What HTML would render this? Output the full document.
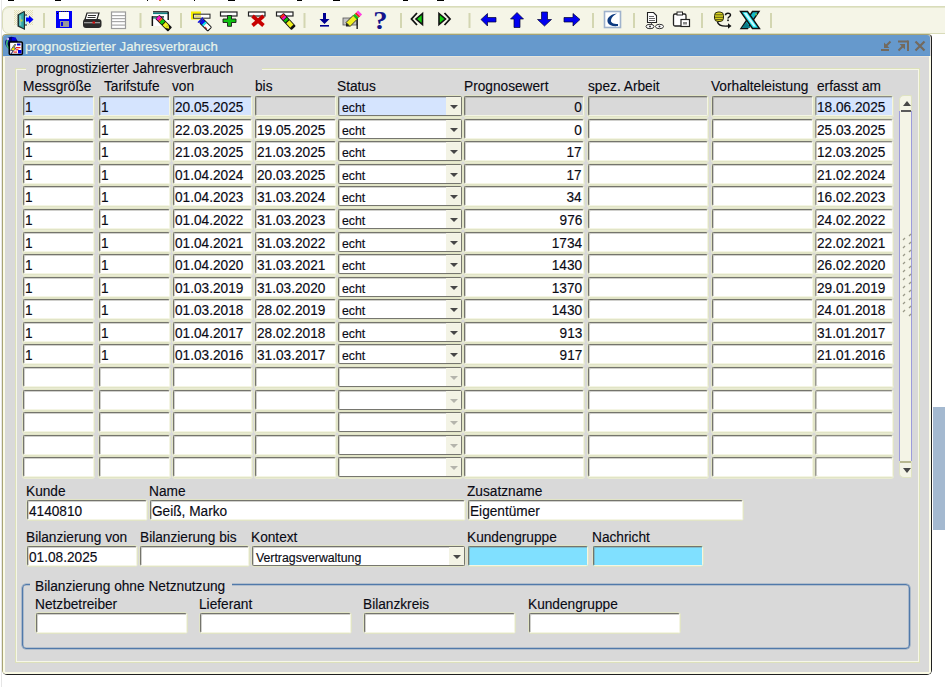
<!DOCTYPE html>
<html><head><meta charset="utf-8"><style>
*{box-sizing:border-box}
html,body{margin:0;padding:0}
body{width:945px;height:687px;overflow:hidden;position:relative;background:#fff;font-family:"Liberation Sans",sans-serif;color:#000}
.a{position:absolute}
.f{position:absolute;border:1px solid #e1e4c6;background:#fff;border-radius:3px}
.f:before{content:"";position:absolute;left:0;top:0;right:0;bottom:0;border-top:1px solid #74746c;border-left:1px solid #74746c;border-right:1px solid #f4f5e4;border-bottom:1px solid #f4f5e4;border-radius:2px;box-shadow:inset 1px 1px 0 rgba(120,120,110,0.35)}
.f span{position:absolute;left:2px;top:1.6px;font-size:14px;line-height:16px;white-space:nowrap;color:#0a0a14;transform:scale(0.975,1.1);transform-origin:0 0;-webkit-text-stroke:0.15px #0a0a14}
.f span.r{left:auto;right:2px;transform-origin:100% 0}
.cur{background:#d5e4fe}
.dis{background:#d9d9d9}
.cy{background:#80e0ff}
.cb span{font-size:12.3px;left:4px;top:4px;transform:none}
.cb:before{border-right-color:#76766f;border-bottom-color:#76766f;border-radius:2px}
.arr{position:absolute;right:1px;top:1px;bottom:1px;width:15px;background:#f3f3e5}
.arr:after{content:"";position:absolute;left:4px;top:8px;border-left:4px solid transparent;border-right:4px solid transparent;border-top:4px solid #474747}
.ea:after{border-top-color:#b4b4ac}
.lt:before{border-top-color:#8a8a80;border-left-color:#989890;box-shadow:inset 1px 0 0 rgba(140,140,125,0.45), inset 0 1px 0 rgba(120,120,110,0.3)}
.lab{position:absolute;font-size:13.7px;line-height:16px;white-space:nowrap;color:#0a0a14;transform:scaleY(1.1);transform-origin:0 0;-webkit-text-stroke:0.12px #0a0a14}
</style></head><body>

<div class="a" style="left:1px;top:0;width:1px;height:687px;background:#e6e6e6"></div>
<div class="a" style="left:8px;top:0;width:6px;height:1px;background:#000"></div>
<div class="a" style="left:55px;top:0;width:6px;height:1px;background:#000"></div>
<div class="a" style="left:147px;top:0;width:1px;height:1px;background:#000"></div>
<div class="a" style="left:194px;top:0;width:1px;height:1px;background:#000"></div>
<div class="a" style="left:228px;top:0;width:7px;height:1px;background:#000"></div>
<div class="a" style="left:297px;top:0;width:5px;height:1px;background:#000"></div>
<div class="a" style="left:333px;top:0;width:7px;height:1px;background:#000"></div>
<div class="a" style="left:403px;top:0;width:5px;height:1px;background:#000"></div>
<div class="a" style="left:437px;top:0;width:7px;height:1px;background:#000"></div>
<div class="a" style="left:159px;top:0;width:2px;height:1px;background:#d08040"></div>
<div class="a" style="left:2px;top:6px;width:950px;height:28px;background:#f5f5e7;border:1px solid #d9dcba;border-radius:7px 0 0 7px;box-shadow:inset 0 1px 0 #e3e6ca"></div>
<svg class="a" style="left:0;top:0" width="945" height="34" viewBox="0 0 945 34"><rect x="43" y="13" width="2" height="15" fill="#d3d6b1"/>
<rect x="139.5" y="13" width="2" height="15" fill="#d3d6b1"/>
<rect x="180" y="13" width="2" height="15" fill="#d3d6b1"/>
<rect x="303.5" y="13" width="2" height="15" fill="#d3d6b1"/>
<rect x="400" y="13" width="2" height="15" fill="#d3d6b1"/>
<rect x="468.5" y="13" width="2" height="15" fill="#d3d6b1"/>
<rect x="592" y="13" width="2" height="15" fill="#d3d6b1"/>
<rect x="633" y="13" width="2" height="15" fill="#d3d6b1"/>
<rect x="701" y="13" width="2" height="15" fill="#d3d6b1"/>
<rect x="770" y="13" width="2" height="15" fill="#d3d6b1"/>
<defs><pattern id="chk" width="2" height="2" patternUnits="userSpaceOnUse"><rect width="1" height="1" fill="#e2dfb6"/><rect x="1" y="1" width="1" height="1" fill="#e2dfb6"/></pattern></defs>
<rect x="14" y="10" width="19" height="15" fill="url(#chk)"/>
<rect x="24" y="14.5" width="3" height="11" fill="#1a1a1a"/>
<rect x="25" y="15.5" width="2" height="9" fill="#b0f0f8"/>
<polygon points="17.5,14.5 24,11 25,11.5 25,30 17.5,26.5" fill="#1f3030"/>
<polygon points="19,15 23.8,12.3 23.8,28.3 19,25.8" fill="#30a8a8"/>
<rect x="19.5" y="15.5" width="1.8" height="10" fill="#80c8c8"/>
<rect x="20.5" y="19.5" width="2" height="2" fill="#c8d040"/>
<polygon points="26,17.5 29,17.5 29,15.5 33.5,19.5 29,23.5 29,21.5 26,21.5" fill="#0000ff"/>
<rect x="56" y="11" width="16" height="17" fill="#0000f8"/>
<rect x="59" y="12" width="10" height="7" fill="#fff"/>
<path d="M59,11.5 h10" stroke="#222" stroke-width="1" stroke-dasharray="1,1"/>
<rect x="60" y="21" width="9" height="6" fill="#9a9a9a"/>
<rect x="61" y="22" width="2" height="4" fill="#0000f8"/>
<rect x="57" y="13" width="1" height="1" fill="#000"/>
<polygon points="87,13 99,13 97,19.5 85,19.5" fill="#fff" stroke="#222" stroke-width="1.2"/>
<rect x="88" y="15" width="8" height="1" fill="#333"/><rect x="87.5" y="17" width="8" height="1" fill="#333"/>
<rect x="83" y="19" width="18.5" height="9" rx="3" fill="#2b2b2b"/>
<rect x="84" y="22" width="16" height="1.3" fill="#9a9a9a"/>
<rect x="92.5" y="21.5" width="2.5" height="2" fill="#e01010"/>
<rect x="111.5" y="12" width="14" height="16.5" fill="#fff" stroke="#9c9c9c" stroke-width="1.2"/>
<rect x="112" y="15" width="13" height="1.2" fill="#a8a8a8"/>
<rect x="112" y="18" width="13" height="1.2" fill="#a8a8a8"/>
<rect x="112" y="21" width="13" height="1.2" fill="#a8a8a8"/>
<rect x="112" y="24.5" width="13" height="1.2" fill="#a8a8a8"/>
<rect x="152.5" y="12" width="16" height="14" fill="#fff"/>
<rect x="153" y="11.2" width="15.5" height="1.3" fill="#111"/>
<rect x="153" y="12.5" width="15.5" height="1.6" fill="#128080"/>
<rect x="167.5" y="12" width="1.4" height="8" fill="#111"/>
<rect x="152" y="16.3" width="12" height="1.2" fill="#111"/>
<rect x="152.5" y="17.4" width="11" height="1.2" fill="#128080"/>
<rect x="151.6" y="16.3" width="1.5" height="9.7" fill="#111"/>
<g transform="translate(163.3,22.8) rotate(45)"><rect x="-8.5" y="-3" width="18" height="6" rx="1" fill="#111"/><rect x="-8" y="-2.2" width="3" height="4.4" fill="#ff10c8"/><rect x="-5" y="-2.2" width="2" height="4.4" fill="#ff5020"/><rect x="-3" y="-2.2" width="3.2" height="4.4" fill="#10c810"/><rect x="1.2" y="-2.2" width="4" height="4.4" fill="#f0f020"/><polygon points="5.2,-2.2 8.5,0 5.2,2.2" fill="#f0f020"/></g>
<rect x="191" y="11.5" width="10" height="8" fill="#f8f000"/>
<rect x="193.5" y="14.2" width="16.5" height="4" fill="#fff" stroke="#333" stroke-width="1.1"/>
<rect x="194.5" y="15.2" width="6.5" height="2" fill="#e8e070"/>
<g transform="translate(204,23.5) rotate(45)"><rect x="-4" y="-3.2" width="12.5" height="6.4" rx="1.5" fill="#111"/><rect x="-3.5" y="-2.4" width="3" height="4.8" fill="#1010f0"/><rect x="-0.5" y="-2.4" width="2" height="4.8" fill="#10e8f8"/><rect x="1.5" y="-2.2" width="6" height="4.4" fill="#fff"/><rect x="3" y="1.3" width="3" height="0.9" fill="#d02020"/><polygon points="-4,-3.2 -5.5,-3.8 -5.5,3.8 -4,3.2" fill="#1010e0"/></g>
<rect x="220.5" y="12" width="16.5" height="4" fill="#fff" stroke="#222" stroke-width="1.2"/>
<path d="M227.5,15.5h4v3.5h4.5v3.5h-4.5v3.8h-4v-3.8h-4.5v-3.5h4.5z" fill="#10c010" stroke="#1a1a1a" stroke-width="0.9"/>
<rect x="248.5" y="12" width="16.5" height="4" fill="#fff" stroke="#222" stroke-width="1.2"/>
<path d="M252.5,16 L263.5,25.5 M263.5,16 L252.5,25.5" stroke="#c80000" stroke-width="3.8" stroke-linecap="butt"/>
<rect x="276.5" y="12" width="16.5" height="4" fill="#fff" stroke="#222" stroke-width="1.2"/>
<g transform="translate(287.5,21.5) rotate(47)"><rect x="-9" y="-3" width="18" height="6" rx="1" fill="#111"/><rect x="-8.5" y="-2.2" width="2.5" height="4.4" fill="#ff2020"/><rect x="-6" y="-2.2" width="2" height="4.4" fill="#ff10c8"/><rect x="-3.5" y="-2.2" width="2.8" height="4.4" fill="#10c010"/><rect x="0.5" y="-2.2" width="6" height="4.4" fill="#f0f020"/><polygon points="6.5,-2.2 9,0 6.5,2.2" fill="#111"/></g>
<path d="M323,13h3v6h3.5l-5,5l-5,-5h3.5z" fill="#000090"/>
<rect x="320" y="25" width="9" height="1.6" fill="#000090"/>
<rect x="343" y="18" width="14" height="7" fill="#c4c4c4" stroke="#555" stroke-width="0.8"/>
<rect x="356.5" y="18" width="1.3" height="11" fill="#111"/>
<g transform="translate(353,19.5) rotate(-45)"><polygon points="-10,0 -7,-2.8 -7,2.8" fill="#222"/><rect x="-7" y="-2.8" width="10" height="5.6" fill="#f0f020" stroke="#222" stroke-width="0.8"/><rect x="3" y="-2.8" width="2.5" height="5.6" fill="#10c010"/><rect x="5.5" y="-2.8" width="2" height="5.6" fill="#f02020"/><rect x="7.5" y="-2.8" width="2.5" height="5.6" fill="#ff40e0"/></g>
<text x="380.5" y="29.3" font-family="Liberation Serif" font-weight="bold" font-size="25.5" fill="#14148c" text-anchor="middle" transform="translate(380.5,0) scale(1.12,1) translate(-380.5,0)">?</text>
<path d="M417,13 L411.5,19 L417,25" fill="none" stroke="#111" stroke-width="1.8"/>
<polygon points="422.5,13.5 416,19 422.5,24.5" fill="#10d010" stroke="#111" stroke-width="1.6"/>
<path d="M444.5,13 L450,19 L444.5,25" fill="none" stroke="#111" stroke-width="1.8"/>
<polygon points="439,13.5 445.5,19 439,24.5" fill="#10d010" stroke="#111" stroke-width="1.6"/>
<polygon points="481,19.5 487.5,13.5 487.5,17.5 496,17.5 496,22 487.5,22 487.5,26" fill="#0000f0" stroke="#000030" stroke-width="0.7"/>
<polygon points="517,12.5 523.5,19 520,19 520,27.5 514,27.5 514,19 510.5,19" fill="#0000f0" stroke="#000030" stroke-width="0.7"/>
<polygon points="541.5,12 547.5,12 547.5,19.5 551.5,19.5 544.5,26 537.5,19.5 541.5,19.5" fill="#0000f0" stroke="#000030" stroke-width="0.7"/>
<polygon points="580,19.5 573,13.5 573,17.5 564,17.5 564,22 573,22 573,26" fill="#0000f0" stroke="#000030" stroke-width="0.7"/>
<rect x="604.5" y="11.5" width="16" height="16" fill="#fff" stroke="#9fb2cc" stroke-width="1.6"/>
<path d="M617,13.5 C609,14.5 606,19 608,23 C609,25.5 613,26.5 618,26 L618,24 C613,24 610.5,22.5 611,20 C611.5,17 614,15 617,13.5 Z" fill="#0d3a80"/>
<path d="M647.5,12.5 h6 l3,3 v7 h-9 z" fill="#fff" stroke="#222" stroke-width="1.1"/>
<rect x="649" y="16" width="5" height="0.9" fill="#555"/><rect x="649" y="18" width="6" height="0.9" fill="#555"/><rect x="649" y="20" width="6" height="0.9" fill="#555"/>
<rect x="651" y="22.5" width="1" height="2" fill="#555"/>
<ellipse cx="650" cy="26.5" rx="4" ry="2.2" fill="#fff" stroke="#333" stroke-width="1"/><circle cx="650" cy="26.5" r="1" fill="#333"/>
<ellipse cx="659.5" cy="26.5" rx="4" ry="2.2" fill="#fff" stroke="#333" stroke-width="1"/><circle cx="659.5" cy="26.5" r="1" fill="#333"/>
<rect x="673.5" y="14" width="12.5" height="12" rx="1.5" fill="#fff" stroke="#222" stroke-width="1.3"/>
<rect x="677" y="12" width="5.5" height="3" fill="#fff" stroke="#222" stroke-width="1"/>
<rect x="681" y="19.5" width="8.5" height="7" fill="#fff" stroke="#222" stroke-width="1.2"/>
<rect x="683" y="22" width="4" height="2.5" fill="#888"/>
<rect x="714.5" y="12" width="9" height="9.5" rx="3.5" fill="#d8d020" stroke="#2a2a10" stroke-width="1"/>
<path d="M715,14.8 h8 M715,17.3 h8 M715,19.6 h8" stroke="#5a5a10" stroke-width="1"/>
<path d="M725.5,15.2 C725.5,12.5 730.5,12.5 730.5,15 C730.5,16.5 728,17 728,18.5" fill="none" stroke="#111" stroke-width="1.5"/><rect x="727.2" y="19.5" width="1.6" height="1.6" fill="#111"/>
<path d="M717.5,22 C718.5,26 723,26.5 728.5,26" fill="none" stroke="#111" stroke-width="1.4"/><polygon points="728,23.2 731.5,26 728,28.8" fill="#111"/>
<polygon points="752.5,11.5 759,11.5 747.5,28.5 741,28.5" fill="#12b8c8" stroke="#111" stroke-width="1.4"/>
<polygon points="741.5,28 746.5,22.5 750.5,28" fill="#0a7c88"/>
<circle cx="756" cy="14.5" r="1" fill="#70c040"/>
<polygon points="740.5,11.5 747.5,11.5 759.5,28.5 752.5,28.5" fill="#18e0ec" stroke="#111" stroke-width="1.4"/>
<polygon points="743.5,12.8 746.5,12.8 756,26.5 753.5,26.5" fill="#c8fbff"/></svg>
<div class="a" style="left:2px;top:34px;width:930px;height:641px;background:#d9d9d9;border-top:1px solid #a8a474;border-left:1px solid #a8a474;border-right:1px solid #202020;border-bottom:1px solid #202020;border-radius:4px 4px 5px 5px"></div>
<div class="a" style="left:3px;top:56px;width:928px;height:618px;border-left:2px solid #fbfbe6;border-bottom:2px solid #fbfbe6;border-right:2px solid #fbfbe6;border-radius:0 0 3px 3px"></div>
<div class="a" style="left:3px;top:35px;width:927px;height:21px;background:#6699cc;border-radius:3px 3px 0 0"></div>
<div class="a" style="left:3px;top:55px;width:927px;height:1px;background:#5e95cf"></div>
<div class="a" style="left:3px;top:56px;width:926px;height:1px;background:#e8e6dc"></div>
<svg class="a" style="left:3px;top:35px" width="22" height="22" viewBox="0 0 22 22">
<ellipse cx="8.5" cy="8" rx="6.3" ry="6.2" fill="#00007a"/>
<path d="M5.5,3.5 C3,7 3.5,11 6,13.5" stroke="#40b878" stroke-width="1.8" fill="none"/>
<rect x="3.5" y="3" width="2.5" height="2" fill="#c0b0f0"/>
<rect x="9" y="2.5" width="4" height="3" fill="#0000e8"/>
<rect x="6.3" y="7" width="13" height="12.5" rx="1" fill="#fff" stroke="#000" stroke-width="1.6"/>
<polygon points="11.5,9.5 7.5,15.5 10,15.5 8,19 13,13 10.8,13 12.8,9.5" fill="#f8f000" stroke="#000070" stroke-width="0.6"/>
<rect x="14" y="8.5" width="3.5" height="2" fill="#0000e0"/>
<rect x="13" y="12" width="4.5" height="1.3" fill="#f02020"/>
<rect x="12.5" y="14.2" width="3" height="1.2" fill="#f02020"/>
<rect x="15" y="15" width="3.5" height="3.5" fill="#0000e0"/>
<rect x="10.5" y="16.5" width="3.5" height="1.2" fill="#f02020"/>
</svg>
<div class="a" style="left:25px;top:38.6px;font-size:13.2px;line-height:16px;color:#e8f4ea;white-space:nowrap;-webkit-text-stroke:0.2px #e8f4ea">prognostizierter Jahresverbrauch</div>
<svg class="a" style="left:876px;top:36px" width="54" height="20" viewBox="876 36 54 20">
<path d="M890.5,41.5 L885.5,46.5" stroke="#736a5e" stroke-width="2"/>
<polygon points="884,42.5 884,48 889.5,48" fill="#736a5e"/>
<rect x="881" y="49" width="8" height="2" fill="#736a5e"/>
<rect x="898" y="40.5" width="10" height="2" fill="#736a5e"/>
<rect x="907" y="40.5" width="2" height="10.5" fill="#736a5e"/>
<path d="M898.5,50.5 L903.5,45.5" stroke="#736a5e" stroke-width="2"/>
<polygon points="905,44 899.5,44 905,49.5" fill="#736a5e"/>
<path d="M915.5,41.5 L924.5,50.5 M924.5,41.5 L915.5,50.5" stroke="#736a5e" stroke-width="2.2"/>
</svg>
<div class="a" style="left:15px;top:68px;width:905px;height:595px;border:1px solid #dde1bb;"></div>
<div class="a" style="left:16px;top:69px;width:903px;height:593px;border:1px solid #f6f7e8;"></div>
<div class="a" style="left:26px;top:60px;width:236px;height:14px;background:#d9d9d9"></div>
<div class="lab" style="left:36px;top:59.8px;font-size:13.5px">prognostizierter Jahresverbrauch</div>
<div class="lab" style="left:23px;top:78.2px">Messgröße</div>
<div class="lab" style="left:104px;top:78.2px">Tarifstufe</div>
<div class="lab" style="left:172px;top:78.2px">von</div>
<div class="lab" style="left:255px;top:78.2px">bis</div>
<div class="lab" style="left:337px;top:78.2px">Status</div>
<div class="lab" style="left:464px;top:78.2px">Prognosewert</div>
<div class="lab" style="left:588px;top:78.2px">spez. Arbeit</div>
<div class="lab" style="left:711px;top:78.2px">Vorhalteleistung</div>
<div class="lab" style="left:817px;top:78.2px">erfasst am</div>
<div class="f cur" style="left:22px;top:95px;width:73px;height:22px;box-shadow:0 1px 0 #e9ebd2"><span>1</span></div>
<div class="f cur" style="left:98px;top:95px;width:73px;height:22px;box-shadow:0 1px 0 #e9ebd2"><span>1</span></div>
<div class="f cur" style="left:172px;top:95px;width:81px;height:22px;box-shadow:0 1px 0 #e9ebd2"><span>20.05.2025</span></div>
<div class="f dis" style="left:254px;top:95px;width:83px;height:22px;box-shadow:0 1px 0 #e9ebd2"></div>
<div class="f cur cb" style="left:337px;top:95px;width:126px;height:22px;box-shadow:0 1px 0 #e9ebd2"><span>echt</span><div class="arr"></div></div>
<div class="f dis" style="left:463px;top:95px;width:122px;height:22px;box-shadow:0 1px 0 #e9ebd2"><span class="r">0</span></div>
<div class="f dis" style="left:587px;top:95px;width:122px;height:22px;box-shadow:0 1px 0 #e9ebd2"></div>
<div class="f dis" style="left:711px;top:95px;width:103px;height:22px;box-shadow:0 1px 0 #e9ebd2"></div>
<div class="f cur lt" style="left:814px;top:95px;width:80px;height:22px;box-shadow:0 1px 0 #e9ebd2"><span>18.06.2025</span></div>
<div class="f" style="left:22px;top:118px;width:73px;height:22px;box-shadow:0 1px 0 #e9ebd2"><span>1</span></div>
<div class="f" style="left:98px;top:118px;width:73px;height:22px;box-shadow:0 1px 0 #e9ebd2"><span>1</span></div>
<div class="f" style="left:172px;top:118px;width:81px;height:22px;box-shadow:0 1px 0 #e9ebd2"><span>22.03.2025</span></div>
<div class="f" style="left:254px;top:118px;width:83px;height:22px;box-shadow:0 1px 0 #e9ebd2"><span>19.05.2025</span></div>
<div class="f cb" style="left:337px;top:118px;width:126px;height:22px;box-shadow:0 1px 0 #e9ebd2"><span>echt</span><div class="arr"></div></div>
<div class="f" style="left:463px;top:118px;width:122px;height:22px;box-shadow:0 1px 0 #e9ebd2"><span class="r">0</span></div>
<div class="f" style="left:587px;top:118px;width:122px;height:22px;box-shadow:0 1px 0 #e9ebd2"></div>
<div class="f" style="left:711px;top:118px;width:103px;height:22px;box-shadow:0 1px 0 #e9ebd2"></div>
<div class="f lt" style="left:814px;top:118px;width:80px;height:22px;box-shadow:0 1px 0 #e9ebd2"><span>25.03.2025</span></div>
<div class="f" style="left:22px;top:140px;width:73px;height:22px;box-shadow:0 1px 0 #e9ebd2"><span>1</span></div>
<div class="f" style="left:98px;top:140px;width:73px;height:22px;box-shadow:0 1px 0 #e9ebd2"><span>1</span></div>
<div class="f" style="left:172px;top:140px;width:81px;height:22px;box-shadow:0 1px 0 #e9ebd2"><span>21.03.2025</span></div>
<div class="f" style="left:254px;top:140px;width:83px;height:22px;box-shadow:0 1px 0 #e9ebd2"><span>21.03.2025</span></div>
<div class="f cb" style="left:337px;top:140px;width:126px;height:22px;box-shadow:0 1px 0 #e9ebd2"><span>echt</span><div class="arr"></div></div>
<div class="f" style="left:463px;top:140px;width:122px;height:22px;box-shadow:0 1px 0 #e9ebd2"><span class="r">17</span></div>
<div class="f" style="left:587px;top:140px;width:122px;height:22px;box-shadow:0 1px 0 #e9ebd2"></div>
<div class="f" style="left:711px;top:140px;width:103px;height:22px;box-shadow:0 1px 0 #e9ebd2"></div>
<div class="f lt" style="left:814px;top:140px;width:80px;height:22px;box-shadow:0 1px 0 #e9ebd2"><span>12.03.2025</span></div>
<div class="f" style="left:22px;top:163px;width:73px;height:22px;box-shadow:0 1px 0 #e9ebd2"><span>1</span></div>
<div class="f" style="left:98px;top:163px;width:73px;height:22px;box-shadow:0 1px 0 #e9ebd2"><span>1</span></div>
<div class="f" style="left:172px;top:163px;width:81px;height:22px;box-shadow:0 1px 0 #e9ebd2"><span>01.04.2024</span></div>
<div class="f" style="left:254px;top:163px;width:83px;height:22px;box-shadow:0 1px 0 #e9ebd2"><span>20.03.2025</span></div>
<div class="f cb" style="left:337px;top:163px;width:126px;height:22px;box-shadow:0 1px 0 #e9ebd2"><span>echt</span><div class="arr"></div></div>
<div class="f" style="left:463px;top:163px;width:122px;height:22px;box-shadow:0 1px 0 #e9ebd2"><span class="r">17</span></div>
<div class="f" style="left:587px;top:163px;width:122px;height:22px;box-shadow:0 1px 0 #e9ebd2"></div>
<div class="f" style="left:711px;top:163px;width:103px;height:22px;box-shadow:0 1px 0 #e9ebd2"></div>
<div class="f lt" style="left:814px;top:163px;width:80px;height:22px;box-shadow:0 1px 0 #e9ebd2"><span>21.02.2024</span></div>
<div class="f" style="left:22px;top:185px;width:73px;height:22px;box-shadow:0 1px 0 #e9ebd2"><span>1</span></div>
<div class="f" style="left:98px;top:185px;width:73px;height:22px;box-shadow:0 1px 0 #e9ebd2"><span>1</span></div>
<div class="f" style="left:172px;top:185px;width:81px;height:22px;box-shadow:0 1px 0 #e9ebd2"><span>01.04.2023</span></div>
<div class="f" style="left:254px;top:185px;width:83px;height:22px;box-shadow:0 1px 0 #e9ebd2"><span>31.03.2024</span></div>
<div class="f cb" style="left:337px;top:185px;width:126px;height:22px;box-shadow:0 1px 0 #e9ebd2"><span>echt</span><div class="arr"></div></div>
<div class="f" style="left:463px;top:185px;width:122px;height:22px;box-shadow:0 1px 0 #e9ebd2"><span class="r">34</span></div>
<div class="f" style="left:587px;top:185px;width:122px;height:22px;box-shadow:0 1px 0 #e9ebd2"></div>
<div class="f" style="left:711px;top:185px;width:103px;height:22px;box-shadow:0 1px 0 #e9ebd2"></div>
<div class="f lt" style="left:814px;top:185px;width:80px;height:22px;box-shadow:0 1px 0 #e9ebd2"><span>16.02.2023</span></div>
<div class="f" style="left:22px;top:208px;width:73px;height:22px;box-shadow:0 1px 0 #e9ebd2"><span>1</span></div>
<div class="f" style="left:98px;top:208px;width:73px;height:22px;box-shadow:0 1px 0 #e9ebd2"><span>1</span></div>
<div class="f" style="left:172px;top:208px;width:81px;height:22px;box-shadow:0 1px 0 #e9ebd2"><span>01.04.2022</span></div>
<div class="f" style="left:254px;top:208px;width:83px;height:22px;box-shadow:0 1px 0 #e9ebd2"><span>31.03.2023</span></div>
<div class="f cb" style="left:337px;top:208px;width:126px;height:22px;box-shadow:0 1px 0 #e9ebd2"><span>echt</span><div class="arr"></div></div>
<div class="f" style="left:463px;top:208px;width:122px;height:22px;box-shadow:0 1px 0 #e9ebd2"><span class="r">976</span></div>
<div class="f" style="left:587px;top:208px;width:122px;height:22px;box-shadow:0 1px 0 #e9ebd2"></div>
<div class="f" style="left:711px;top:208px;width:103px;height:22px;box-shadow:0 1px 0 #e9ebd2"></div>
<div class="f lt" style="left:814px;top:208px;width:80px;height:22px;box-shadow:0 1px 0 #e9ebd2"><span>24.02.2022</span></div>
<div class="f" style="left:22px;top:231px;width:73px;height:22px;box-shadow:0 1px 0 #e9ebd2"><span>1</span></div>
<div class="f" style="left:98px;top:231px;width:73px;height:22px;box-shadow:0 1px 0 #e9ebd2"><span>1</span></div>
<div class="f" style="left:172px;top:231px;width:81px;height:22px;box-shadow:0 1px 0 #e9ebd2"><span>01.04.2021</span></div>
<div class="f" style="left:254px;top:231px;width:83px;height:22px;box-shadow:0 1px 0 #e9ebd2"><span>31.03.2022</span></div>
<div class="f cb" style="left:337px;top:231px;width:126px;height:22px;box-shadow:0 1px 0 #e9ebd2"><span>echt</span><div class="arr"></div></div>
<div class="f" style="left:463px;top:231px;width:122px;height:22px;box-shadow:0 1px 0 #e9ebd2"><span class="r">1734</span></div>
<div class="f" style="left:587px;top:231px;width:122px;height:22px;box-shadow:0 1px 0 #e9ebd2"></div>
<div class="f" style="left:711px;top:231px;width:103px;height:22px;box-shadow:0 1px 0 #e9ebd2"></div>
<div class="f lt" style="left:814px;top:231px;width:80px;height:22px;box-shadow:0 1px 0 #e9ebd2"><span>22.02.2021</span></div>
<div class="f" style="left:22px;top:253px;width:73px;height:22px;box-shadow:0 1px 0 #e9ebd2"><span>1</span></div>
<div class="f" style="left:98px;top:253px;width:73px;height:22px;box-shadow:0 1px 0 #e9ebd2"><span>1</span></div>
<div class="f" style="left:172px;top:253px;width:81px;height:22px;box-shadow:0 1px 0 #e9ebd2"><span>01.04.2020</span></div>
<div class="f" style="left:254px;top:253px;width:83px;height:22px;box-shadow:0 1px 0 #e9ebd2"><span>31.03.2021</span></div>
<div class="f cb" style="left:337px;top:253px;width:126px;height:22px;box-shadow:0 1px 0 #e9ebd2"><span>echt</span><div class="arr"></div></div>
<div class="f" style="left:463px;top:253px;width:122px;height:22px;box-shadow:0 1px 0 #e9ebd2"><span class="r">1430</span></div>
<div class="f" style="left:587px;top:253px;width:122px;height:22px;box-shadow:0 1px 0 #e9ebd2"></div>
<div class="f" style="left:711px;top:253px;width:103px;height:22px;box-shadow:0 1px 0 #e9ebd2"></div>
<div class="f lt" style="left:814px;top:253px;width:80px;height:22px;box-shadow:0 1px 0 #e9ebd2"><span>26.02.2020</span></div>
<div class="f" style="left:22px;top:276px;width:73px;height:22px;box-shadow:0 1px 0 #e9ebd2"><span>1</span></div>
<div class="f" style="left:98px;top:276px;width:73px;height:22px;box-shadow:0 1px 0 #e9ebd2"><span>1</span></div>
<div class="f" style="left:172px;top:276px;width:81px;height:22px;box-shadow:0 1px 0 #e9ebd2"><span>01.03.2019</span></div>
<div class="f" style="left:254px;top:276px;width:83px;height:22px;box-shadow:0 1px 0 #e9ebd2"><span>31.03.2020</span></div>
<div class="f cb" style="left:337px;top:276px;width:126px;height:22px;box-shadow:0 1px 0 #e9ebd2"><span>echt</span><div class="arr"></div></div>
<div class="f" style="left:463px;top:276px;width:122px;height:22px;box-shadow:0 1px 0 #e9ebd2"><span class="r">1370</span></div>
<div class="f" style="left:587px;top:276px;width:122px;height:22px;box-shadow:0 1px 0 #e9ebd2"></div>
<div class="f" style="left:711px;top:276px;width:103px;height:22px;box-shadow:0 1px 0 #e9ebd2"></div>
<div class="f lt" style="left:814px;top:276px;width:80px;height:22px;box-shadow:0 1px 0 #e9ebd2"><span>29.01.2019</span></div>
<div class="f" style="left:22px;top:298px;width:73px;height:22px;box-shadow:0 1px 0 #e9ebd2"><span>1</span></div>
<div class="f" style="left:98px;top:298px;width:73px;height:22px;box-shadow:0 1px 0 #e9ebd2"><span>1</span></div>
<div class="f" style="left:172px;top:298px;width:81px;height:22px;box-shadow:0 1px 0 #e9ebd2"><span>01.03.2018</span></div>
<div class="f" style="left:254px;top:298px;width:83px;height:22px;box-shadow:0 1px 0 #e9ebd2"><span>28.02.2019</span></div>
<div class="f cb" style="left:337px;top:298px;width:126px;height:22px;box-shadow:0 1px 0 #e9ebd2"><span>echt</span><div class="arr"></div></div>
<div class="f" style="left:463px;top:298px;width:122px;height:22px;box-shadow:0 1px 0 #e9ebd2"><span class="r">1430</span></div>
<div class="f" style="left:587px;top:298px;width:122px;height:22px;box-shadow:0 1px 0 #e9ebd2"></div>
<div class="f" style="left:711px;top:298px;width:103px;height:22px;box-shadow:0 1px 0 #e9ebd2"></div>
<div class="f lt" style="left:814px;top:298px;width:80px;height:22px;box-shadow:0 1px 0 #e9ebd2"><span>24.01.2018</span></div>
<div class="f" style="left:22px;top:321px;width:73px;height:22px;box-shadow:0 1px 0 #e9ebd2"><span>1</span></div>
<div class="f" style="left:98px;top:321px;width:73px;height:22px;box-shadow:0 1px 0 #e9ebd2"><span>1</span></div>
<div class="f" style="left:172px;top:321px;width:81px;height:22px;box-shadow:0 1px 0 #e9ebd2"><span>01.04.2017</span></div>
<div class="f" style="left:254px;top:321px;width:83px;height:22px;box-shadow:0 1px 0 #e9ebd2"><span>28.02.2018</span></div>
<div class="f cb" style="left:337px;top:321px;width:126px;height:22px;box-shadow:0 1px 0 #e9ebd2"><span>echt</span><div class="arr"></div></div>
<div class="f" style="left:463px;top:321px;width:122px;height:22px;box-shadow:0 1px 0 #e9ebd2"><span class="r">913</span></div>
<div class="f" style="left:587px;top:321px;width:122px;height:22px;box-shadow:0 1px 0 #e9ebd2"></div>
<div class="f" style="left:711px;top:321px;width:103px;height:22px;box-shadow:0 1px 0 #e9ebd2"></div>
<div class="f lt" style="left:814px;top:321px;width:80px;height:22px;box-shadow:0 1px 0 #e9ebd2"><span>31.01.2017</span></div>
<div class="f" style="left:22px;top:343px;width:73px;height:22px;box-shadow:0 1px 0 #e9ebd2"><span>1</span></div>
<div class="f" style="left:98px;top:343px;width:73px;height:22px;box-shadow:0 1px 0 #e9ebd2"><span>1</span></div>
<div class="f" style="left:172px;top:343px;width:81px;height:22px;box-shadow:0 1px 0 #e9ebd2"><span>01.03.2016</span></div>
<div class="f" style="left:254px;top:343px;width:83px;height:22px;box-shadow:0 1px 0 #e9ebd2"><span>31.03.2017</span></div>
<div class="f cb" style="left:337px;top:343px;width:126px;height:22px;box-shadow:0 1px 0 #e9ebd2"><span>echt</span><div class="arr"></div></div>
<div class="f" style="left:463px;top:343px;width:122px;height:22px;box-shadow:0 1px 0 #e9ebd2"><span class="r">917</span></div>
<div class="f" style="left:587px;top:343px;width:122px;height:22px;box-shadow:0 1px 0 #e9ebd2"></div>
<div class="f" style="left:711px;top:343px;width:103px;height:22px;box-shadow:0 1px 0 #e9ebd2"></div>
<div class="f lt" style="left:814px;top:343px;width:80px;height:22px;box-shadow:0 1px 0 #e9ebd2"><span>21.01.2016</span></div>
<div class="f" style="left:22px;top:366px;width:73px;height:22px;box-shadow:0 1px 0 #e9ebd2"></div>
<div class="f" style="left:98px;top:366px;width:73px;height:22px;box-shadow:0 1px 0 #e9ebd2"></div>
<div class="f" style="left:172px;top:366px;width:81px;height:22px;box-shadow:0 1px 0 #e9ebd2"></div>
<div class="f" style="left:254px;top:366px;width:83px;height:22px;box-shadow:0 1px 0 #e9ebd2"></div>
<div class="f cb" style="left:337px;top:366px;width:126px;height:22px;box-shadow:0 1px 0 #e9ebd2"><div class="arr ea"></div></div>
<div class="f" style="left:463px;top:366px;width:122px;height:22px;box-shadow:0 1px 0 #e9ebd2"></div>
<div class="f" style="left:587px;top:366px;width:122px;height:22px;box-shadow:0 1px 0 #e9ebd2"></div>
<div class="f" style="left:711px;top:366px;width:103px;height:22px;box-shadow:0 1px 0 #e9ebd2"></div>
<div class="f lt" style="left:814px;top:366px;width:80px;height:22px;box-shadow:0 1px 0 #e9ebd2"></div>
<div class="f" style="left:22px;top:389px;width:73px;height:22px;box-shadow:0 1px 0 #e9ebd2"></div>
<div class="f" style="left:98px;top:389px;width:73px;height:22px;box-shadow:0 1px 0 #e9ebd2"></div>
<div class="f" style="left:172px;top:389px;width:81px;height:22px;box-shadow:0 1px 0 #e9ebd2"></div>
<div class="f" style="left:254px;top:389px;width:83px;height:22px;box-shadow:0 1px 0 #e9ebd2"></div>
<div class="f cb" style="left:337px;top:389px;width:126px;height:22px;box-shadow:0 1px 0 #e9ebd2"><div class="arr ea"></div></div>
<div class="f" style="left:463px;top:389px;width:122px;height:22px;box-shadow:0 1px 0 #e9ebd2"></div>
<div class="f" style="left:587px;top:389px;width:122px;height:22px;box-shadow:0 1px 0 #e9ebd2"></div>
<div class="f" style="left:711px;top:389px;width:103px;height:22px;box-shadow:0 1px 0 #e9ebd2"></div>
<div class="f lt" style="left:814px;top:389px;width:80px;height:22px;box-shadow:0 1px 0 #e9ebd2"></div>
<div class="f" style="left:22px;top:411px;width:73px;height:22px;box-shadow:0 1px 0 #e9ebd2"></div>
<div class="f" style="left:98px;top:411px;width:73px;height:22px;box-shadow:0 1px 0 #e9ebd2"></div>
<div class="f" style="left:172px;top:411px;width:81px;height:22px;box-shadow:0 1px 0 #e9ebd2"></div>
<div class="f" style="left:254px;top:411px;width:83px;height:22px;box-shadow:0 1px 0 #e9ebd2"></div>
<div class="f cb" style="left:337px;top:411px;width:126px;height:22px;box-shadow:0 1px 0 #e9ebd2"><div class="arr ea"></div></div>
<div class="f" style="left:463px;top:411px;width:122px;height:22px;box-shadow:0 1px 0 #e9ebd2"></div>
<div class="f" style="left:587px;top:411px;width:122px;height:22px;box-shadow:0 1px 0 #e9ebd2"></div>
<div class="f" style="left:711px;top:411px;width:103px;height:22px;box-shadow:0 1px 0 #e9ebd2"></div>
<div class="f lt" style="left:814px;top:411px;width:80px;height:22px;box-shadow:0 1px 0 #e9ebd2"></div>
<div class="f" style="left:22px;top:434px;width:73px;height:22px;box-shadow:0 1px 0 #e9ebd2"></div>
<div class="f" style="left:98px;top:434px;width:73px;height:22px;box-shadow:0 1px 0 #e9ebd2"></div>
<div class="f" style="left:172px;top:434px;width:81px;height:22px;box-shadow:0 1px 0 #e9ebd2"></div>
<div class="f" style="left:254px;top:434px;width:83px;height:22px;box-shadow:0 1px 0 #e9ebd2"></div>
<div class="f cb" style="left:337px;top:434px;width:126px;height:22px;box-shadow:0 1px 0 #e9ebd2"><div class="arr ea"></div></div>
<div class="f" style="left:463px;top:434px;width:122px;height:22px;box-shadow:0 1px 0 #e9ebd2"></div>
<div class="f" style="left:587px;top:434px;width:122px;height:22px;box-shadow:0 1px 0 #e9ebd2"></div>
<div class="f" style="left:711px;top:434px;width:103px;height:22px;box-shadow:0 1px 0 #e9ebd2"></div>
<div class="f lt" style="left:814px;top:434px;width:80px;height:22px;box-shadow:0 1px 0 #e9ebd2"></div>
<div class="f" style="left:22px;top:456px;width:73px;height:22px;box-shadow:0 1px 0 #e9ebd2"></div>
<div class="f" style="left:98px;top:456px;width:73px;height:22px;box-shadow:0 1px 0 #e9ebd2"></div>
<div class="f" style="left:172px;top:456px;width:81px;height:22px;box-shadow:0 1px 0 #e9ebd2"></div>
<div class="f" style="left:254px;top:456px;width:83px;height:22px;box-shadow:0 1px 0 #e9ebd2"></div>
<div class="f cb" style="left:337px;top:456px;width:126px;height:22px;box-shadow:0 1px 0 #e9ebd2"><div class="arr ea"></div></div>
<div class="f" style="left:463px;top:456px;width:122px;height:22px;box-shadow:0 1px 0 #e9ebd2"></div>
<div class="f" style="left:587px;top:456px;width:122px;height:22px;box-shadow:0 1px 0 #e9ebd2"></div>
<div class="f" style="left:711px;top:456px;width:103px;height:22px;box-shadow:0 1px 0 #e9ebd2"></div>
<div class="f lt" style="left:814px;top:456px;width:80px;height:22px;box-shadow:0 1px 0 #e9ebd2"></div>
<div class="a" style="left:899px;top:110px;width:13px;height:352px;background:#f4f4e6;border-left:1px solid #9c9cdc;border-right:1px solid #9c9cdc"></div>
<div class="a" style="left:899px;top:95px;width:13px;height:16px;background:#f4f4e6;border:1px solid #dfe3c2;border-bottom:0;border-radius:5px 2px 0 0"></div>
<div class="a" style="left:901px;top:110px;width:10px;height:1.5px;background:#5a5a5a"></div>
<div class="a" style="left:903px;top:101px;border-left:4px solid transparent;border-right:4px solid transparent;border-bottom:5px solid #474747"></div>
<div class="a" style="left:899px;top:461px;width:13px;height:17px;background:#f4f4e6;border:1px solid #dfe3c2;border-top:0;border-radius:0 0 2px 5px"></div>
<div class="a" style="left:900px;top:461px;width:11px;height:2px;background:#b8b890"></div>
<div class="a" style="left:903px;top:468px;border-left:4px solid transparent;border-right:4px solid transparent;border-top:5px solid #474747"></div>
<svg class="a" style="left:0;top:0" width="945" height="687" viewBox="0 0 945 687"><path d="M909,236 l2,-2" stroke="#9a9a88" stroke-width="1.2"/><path d="M903,240 l2,-2" stroke="#9a9a88" stroke-width="1.2"/><path d="M909,244 l2,-2" stroke="#9a9a88" stroke-width="1.2"/><path d="M903,248 l2,-2" stroke="#9a9a88" stroke-width="1.2"/><path d="M909,252 l2,-2" stroke="#9a9a88" stroke-width="1.2"/><path d="M903,256 l2,-2" stroke="#9a9a88" stroke-width="1.2"/><path d="M909,260 l2,-2" stroke="#9a9a88" stroke-width="1.2"/><path d="M903,264 l2,-2" stroke="#9a9a88" stroke-width="1.2"/><path d="M909,268 l2,-2" stroke="#9a9a88" stroke-width="1.2"/><path d="M903,272 l2,-2" stroke="#9a9a88" stroke-width="1.2"/><path d="M909,276 l2,-2" stroke="#9a9a88" stroke-width="1.2"/><path d="M903,280 l2,-2" stroke="#9a9a88" stroke-width="1.2"/><path d="M909,284 l2,-2" stroke="#9a9a88" stroke-width="1.2"/><path d="M903,288 l2,-2" stroke="#9a9a88" stroke-width="1.2"/><path d="M909,292 l2,-2" stroke="#9a9a88" stroke-width="1.2"/><path d="M903,296 l2,-2" stroke="#9a9a88" stroke-width="1.2"/><path d="M909,300 l2,-2" stroke="#9a9a88" stroke-width="1.2"/><path d="M903,304 l2,-2" stroke="#9a9a88" stroke-width="1.2"/><path d="M909,308 l2,-2" stroke="#9a9a88" stroke-width="1.2"/><path d="M903,312 l2,-2" stroke="#9a9a88" stroke-width="1.2"/><path d="M909,316 l2,-2" stroke="#9a9a88" stroke-width="1.2"/></svg>
<div class="a" style="left:933px;top:407px;width:12px;height:123px;background:#a4b9d0"></div>
<div class="lab" style="left:26px;top:483px">Kunde</div>
<div class="lab" style="left:149px;top:483px">Name</div>
<div class="lab" style="left:467px;top:483px">Zusatzname</div>
<div class="f" style="left:26px;top:499px;width:122px;height:22px"><span>4140810</span></div>
<div class="f" style="left:149px;top:499px;width:317px;height:22px"><span>Geiß, Marko</span></div>
<div class="f" style="left:467px;top:499px;width:277px;height:22px"><span>Eigentümer</span></div>
<div class="lab" style="left:26px;top:529px">Bilanzierung von</div>
<div class="lab" style="left:140px;top:529px">Bilanzierung bis</div>
<div class="lab" style="left:251px;top:529px">Kontext</div>
<div class="lab" style="left:467px;top:529px">Kundengruppe</div>
<div class="lab" style="left:592px;top:529px">Nachricht</div>
<div class="f" style="left:26px;top:545px;width:112px;height:22px"><span>01.08.2025</span></div>
<div class="f" style="left:139px;top:545px;width:111px;height:22px"></div>
<div class="f cb" style="left:251px;top:545px;width:215px;height:22px"><span>Vertragsverwaltung</span><div class="arr"></div></div>
<div class="f cy" style="left:467px;top:545px;width:122px;height:22px"></div>
<div class="f cy" style="left:592px;top:545px;width:112px;height:22px"></div>
<div class="a" style="left:22px;top:584px;width:888px;height:65px;border:1px solid #5079aa;border-radius:4px;box-shadow:0 0 0 0.6px rgba(90,130,178,0.6), inset 0 0 0 0.6px rgba(90,130,178,0.6)"></div>
<div class="a" style="left:30px;top:578px;width:202px;height:14px;background:#d9d9d9"></div>
<div class="lab" style="left:35px;top:578px">Bilanzierung ohne Netznutzung</div>
<div class="lab" style="left:35px;top:596px">Netzbetreiber</div>
<div class="f" style="left:35px;top:612px;width:153px;height:22px"></div>
<div class="lab" style="left:199px;top:596px">Lieferant</div>
<div class="f" style="left:199px;top:612px;width:153px;height:22px"></div>
<div class="lab" style="left:363px;top:596px">Bilanzkreis</div>
<div class="f" style="left:363px;top:612px;width:153px;height:22px"></div>
<div class="lab" style="left:528px;top:596px">Kundengruppe</div>
<div class="f" style="left:528px;top:612px;width:153px;height:22px"></div>
</body></html>
